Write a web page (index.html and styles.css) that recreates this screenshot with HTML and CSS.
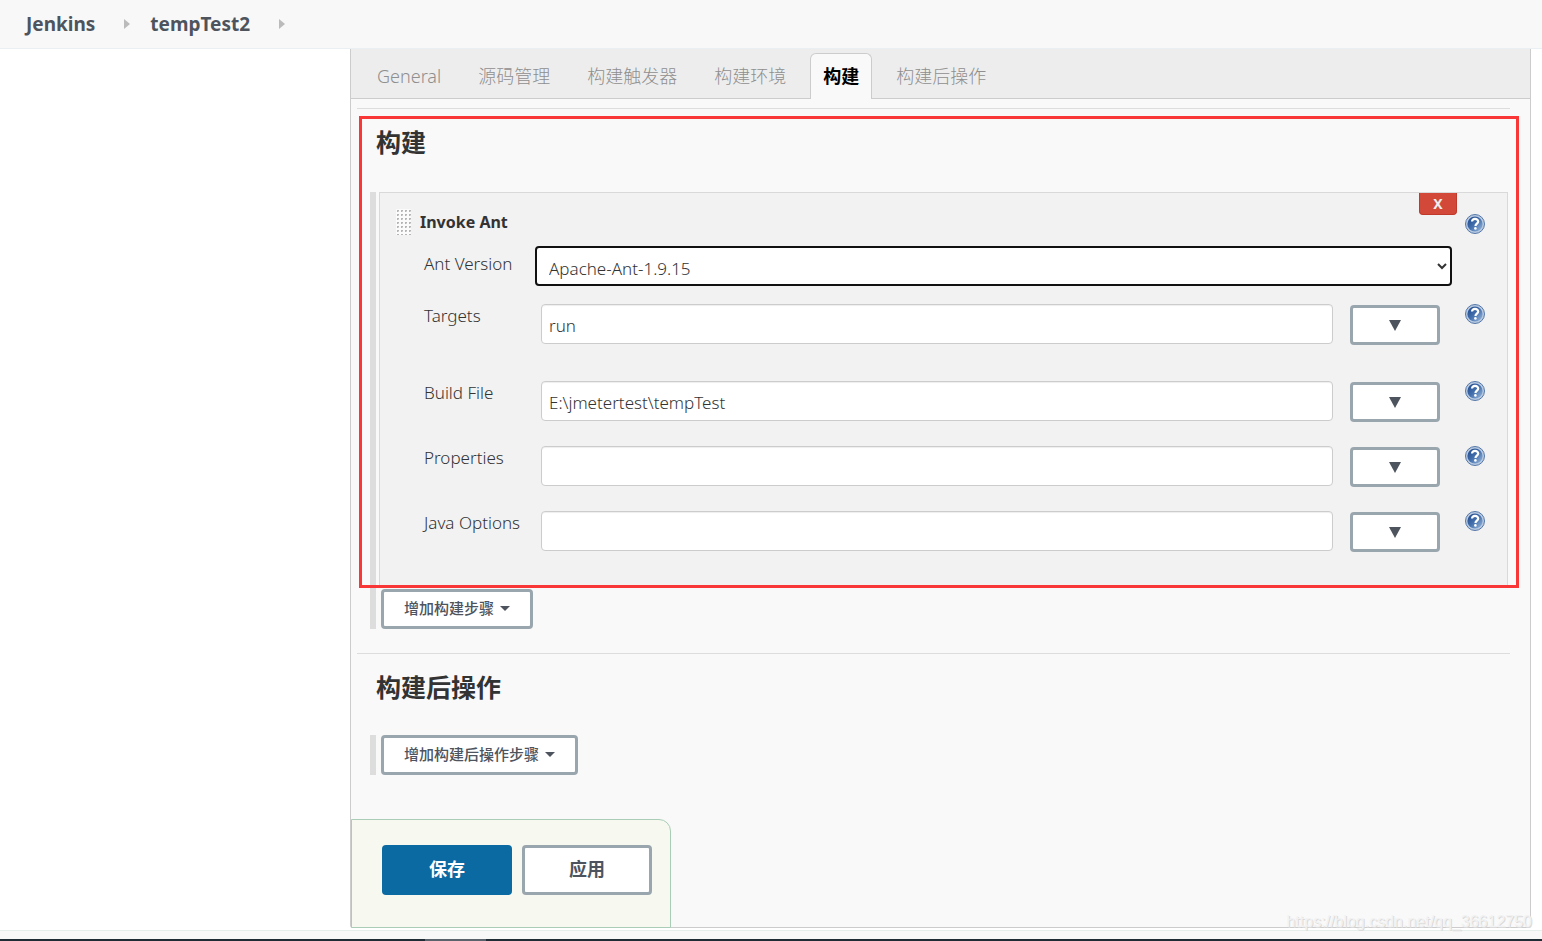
FILE: index.html
```html
<!DOCTYPE html>
<html lang="zh-CN">
<head>
<meta charset="utf-8">
<title>tempTest2 Config [Jenkins]</title>
<link rel="stylesheet" href="styles.css">
</head>
<body>
<svg class="defs" aria-hidden="true">
  <defs>
    <linearGradient id="ball" x1="0" y1="0" x2="1" y2="1">
      <stop offset="0" stop-color="#1d4587"/>
      <stop offset="0.5" stop-color="#4470ad"/>
      <stop offset="1" stop-color="#9dbde0"/>
    </linearGradient>
    <symbol id="help" viewBox="0 0 20 20">
      <circle cx="10" cy="10" r="9.5" fill="#b9cae1" stroke="#5578a8"/>
      <circle cx="10" cy="10" r="7.6" fill="url(#ball)"/>
      <path d="M7 7.6C7 5.6 8.300 4.900 10 4.900s3.200.9 3.200 2.700c0 2-2.700 2.200-2.700 4.400" fill="none" stroke="#fff" stroke-width="2.200"/>
      <circle cx="10.400" cy="14.400" r="1.300" fill="#fff"/>
    </symbol>
    <pattern id="dots" width="4" height="4" patternUnits="userSpaceOnUse">
      <rect width="4" height="4" fill="#fbfbfb"/>
      <path d="M1 1h2v1h-1v1h-1z" fill="#b5b5b5"/>
      <path d="M2 2h1v1h-1z" fill="#d4d4d4"/>
    </pattern>
  </defs>
</svg>

<header class="breadcrumbs">
  <a href="#">Jenkins</a>
  <span class="crumb-arrow"></span>
  <a href="#">tempTest2</a>
  <span class="crumb-arrow"></span>
</header>

<main class="page">
  <form class="panel">
    <nav class="tabs">
      <a class="tab" href="#">General</a>
      <a class="tab" href="#">源码管理</a>
      <a class="tab" href="#">构建触发器</a>
      <a class="tab" href="#">构建环境</a>
      <a class="tab active" href="#">构建</a>
      <a class="tab" href="#">构建后操作</a>
    </nav>

    <div class="content">
      <section class="section">
        <h2>构建</h2>
        <div class="steps steps-build">
          <div class="step">
            <button class="delete" type="button">X</button>
            <div class="step-head">
              <svg class="grip" width="15" height="26" aria-hidden="true"><rect width="15" height="26" fill="url(#dots)"/></svg>
              <h3>Invoke Ant</h3>
              <a class="help" href="#" aria-label="Help"><svg><use href="#help"/></svg></a>
            </div>
            <div class="row row-select">
              <label for="version">Ant Version</label>
              <select id="version"><option>Apache-Ant-1.9.15</option></select>
            </div>
            <div class="row row-tall">
              <label for="targets">Targets</label>
              <div class="control"><input id="targets" type="text" value="run"><button class="expand" type="button" aria-label="Expand"><svg width="12" height="11"><path d="M0 0h12L6 11z" fill="#4d545d"/></svg></button></div>
              <a class="help" href="#" aria-label="Help"><svg><use href="#help"/></svg></a>
            </div>
            <div class="row">
              <label for="buildfile">Build File</label>
              <div class="control"><input id="buildfile" type="text" value="E:\jmetertest\tempTest"><button class="expand" type="button" aria-label="Expand"><svg width="12" height="11"><path d="M0 0h12L6 11z" fill="#4d545d"/></svg></button></div>
              <a class="help" href="#" aria-label="Help"><svg><use href="#help"/></svg></a>
            </div>
            <div class="row">
              <label for="properties">Properties</label>
              <div class="control"><input id="properties" type="text"><button class="expand" type="button" aria-label="Expand"><svg width="12" height="11"><path d="M0 0h12L6 11z" fill="#4d545d"/></svg></button></div>
              <a class="help" href="#" aria-label="Help"><svg><use href="#help"/></svg></a>
            </div>
            <div class="row">
              <label for="javaopts">Java Options</label>
              <div class="control"><input id="javaopts" type="text"><button class="expand" type="button" aria-label="Expand"><svg width="12" height="11"><path d="M0 0h12L6 11z" fill="#4d545d"/></svg></button></div>
              <a class="help" href="#" aria-label="Help"><svg><use href="#help"/></svg></a>
            </div>
            <div class="highlight"></div>
          </div>
          <button class="add" type="button">增加构建步骤<span class="caret"></span></button>
        </div>
      </section>

      <section class="section">
        <h2>构建后操作</h2>
        <div class="steps">
          <button class="add" type="button">增加构建后操作步骤<span class="caret"></span></button>
        </div>
      </section>
    </div>

    <div class="save-bar">
      <button class="save" type="submit">保存</button>
      <button class="apply" type="button">应用</button>
    </div>
  </form>
</main>

<footer class="footer"></footer>
<div class="taskbar"><span class="task"></span></div>
<div class="watermark">https://blog.csdn.net/qq_36612750</div>
</body>
</html>
```

FILE: styles.css
```css
* { box-sizing: border-box; }

body {
  margin: 0;
  min-height: 100vh;
  display: flex;
  flex-direction: column;
  position: relative;
  background: #fff;
  color: #333;
  font-family: "Noto Sans", "Noto Sans CJK SC", sans-serif;
  font-size: 16px;
  line-height: 24px;
}

button, input, select { font: inherit; color: inherit; margin: 0; }
button { cursor: pointer; }
a { color: inherit; text-decoration: none; }
.defs { position: absolute; width: 0; height: 0; }

.breadcrumbs {
  display: flex;
  align-items: center;
  height: 49px;
  padding-left: 26px;
  background: #f8f8f8;
  border-bottom: 1px solid #e9eff2;
  color: #4d545d;
  font-size: 19px;
  font-weight: 700;
}
.crumb-arrow {
  margin: 0 20px 0 29px;
  border: solid transparent;
  border-width: 5px 0 5px 6px;
  border-left-color: #bbb;
}

.page { flex: 1; display: flex; padding: 0 11px 2px 350px; }
.panel {
  flex: 1;
  min-width: 0;
  display: flex;
  flex-direction: column;
  background: #f9f9f9;
  border: 1px solid #ccc;
  border-top: 0;
  border-radius: 0 0 3px 3px;
}

.tabs {
  display: flex;
  align-items: flex-end;
  gap: 11px;
  height: 50px;
  padding-left: 13px;
  background: #ededed;
  border-bottom: 1px solid #ccc;
}
.tab {
  height: 46px;
  margin-bottom: -1px;
  padding: 0 12px;
  border: 1px solid transparent;
  border-bottom: 0;
  border-radius: 6px 6px 0 0;
  color: #8f8f8f;
  font-size: 18px;
  font-weight: 300;
  line-height: 45px;
}
.tab.active {
  background: #f9f9f9;
  border-color: #ccc;
  color: #000;
  font-weight: 700;
}

.content { padding: 9px 20px 0 6px; }
.section {
  border-top: 1px solid #ddd;
  padding: 0 2px 24px 13px;
}
h2 {
  margin: 0;
  padding: 0 0 15px 6px;
  font-size: 25px;
  line-height: 66px;
}
.steps { border-left: 6px solid #ddd; padding-left: 3px; }
.steps-build { margin-top: 2px; }

.step {
  position: relative;
  margin-bottom: 2px;
  padding: 0 22px 10px 44px;
  background: #f2f2f2;
  border: 1px solid #d9d9d9;
}
.highlight {
  position: absolute;
  inset: -77px -12px -2px -21px;
  border: 3px solid #f93737;
  pointer-events: none;
}
.delete {
  position: absolute;
  top: 0;
  right: 50px;
  width: 38px;
  height: 22px;
  padding: 0;
  background: #d24939;
  border: 1px solid #c03a2b;
  border-top: 0;
  border-radius: 0 0 4px 4px;
  color: #eee;
  font-size: 14px;
  font-weight: 700;
  line-height: 20px;
}
.step-head {
  display: flex;
  align-items: flex-start;
  gap: 9px;
  height: 53px;
  margin-left: -28px;
  padding-top: 16px;
}
.step-head h3 { flex: 1; margin: 0; font-size: 16px; line-height: 26px; }
.step-head .help { margin-top: 5px; }

.row {
  display: grid;
  grid-template-columns: 111px 1fr 20px;
  align-items: start;
  min-height: 65px;
}
.row label { font-size: 17px; font-weight: 300; }
.row-select { min-height: 58px; }
.row-select label { padding-top: 6px; }
.row-tall { min-height: 77px; }

select {
  height: 40px;
  margin-right: 13px;
  padding: 4px 2px 0 8px;
  background-color: #fff;
  border: 2px solid #111;
  border-radius: 4px;
  font-size: 17px;
  font-weight: 300;
}
.control { display: flex; gap: 17px; padding: 0 25px 0 6px; }
input {
  flex: 1;
  min-width: 0;
  height: 40px;
  padding: 2px 7px 0;
  background: #fff;
  border: 1px solid #ccc;
  border-radius: 4px;
  box-shadow: inset 0 1px 1px #eee;
  font-size: 17px;
  font-weight: 300;
}
.help, .help svg { display: block; width: 20px; height: 20px; }

.expand, .add, .apply {
  background: #fff;
  border: 3px solid #9aa6ae;
  border-radius: 4px;
  color: #4d545d;
}
.expand {
  display: flex;
  align-items: center;
  justify-content: center;
  width: 90px;
  height: 40px;
  margin-top: 1px;
  padding: 0;
}
.add {
  display: flex;
  align-items: center;
  gap: 6px;
  height: 40px;
  margin-left: 2px;
  padding: 0 20px 2px;
  font-size: 15px;
  font-weight: 500;
}
.caret { border: 5px solid transparent; border-bottom: 0; border-top-color: #4d545d; }

.save-bar {
  display: flex;
  gap: 10px;
  width: 320px;
  margin: auto 0 -1px;
  padding: 25px 18px 32px 30px;
  background: #f7f8f0;
  border: 1px solid #a9cdb6;
  border-radius: 0 12px 0 0;
}
.save, .apply {
  width: 130px;
  height: 50px;
  padding: 0 0 2px;
  font-size: 18px;
  font-weight: 700;
}
.save { background: #0b6aa2; border: 0; border-radius: 4px; color: #fff; }

.footer { height: 9px; background: #f8f8f8; border-top: 1px solid #e5eeeb; }
.taskbar { height: 2px; padding-left: 425px; background: #1f2b35; }
.task { display: block; width: 61px; height: 2px; background: #5a636b; }
.watermark {
  position: absolute;
  right: 10px;
  bottom: 7px;
  color: #f2f2f2;
  font-family: "Liberation Sans", sans-serif;
  font-size: 16px;
  text-shadow: 1px 1px 0 #dadada;
}
```
